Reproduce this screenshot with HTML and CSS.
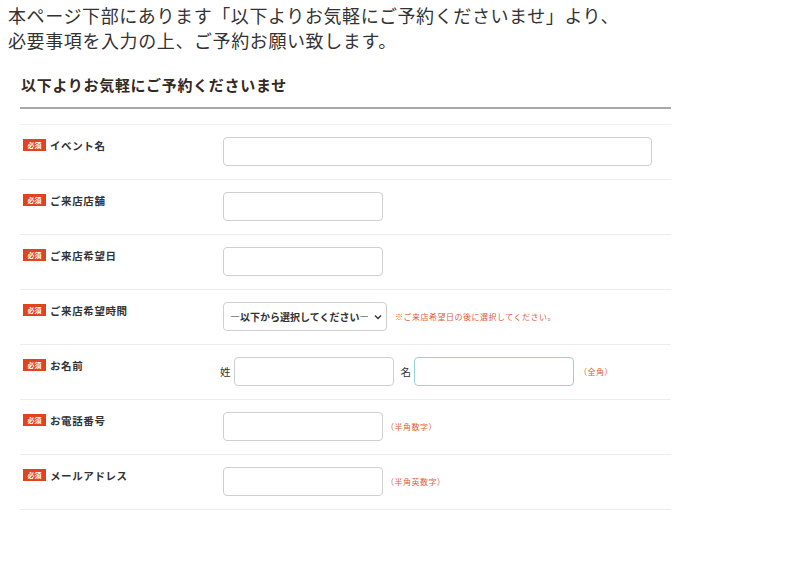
FILE: index.html
```html
<!DOCTYPE html>
<html lang="ja">

<head>
    <meta charset="UTF-8">
    <meta name="viewport" content="width=device-width, initial-scale=1.0">
    <title>ご予約フォーム</title>
    <link rel="stylesheet" href="styles.css">
</head>

<body>
    <p class="intro">本ページ下部にあります「以下よりお気軽にご予約くださいませ」より、<br>必要事項を入力の上、ご予約お願い致します。</p>

    <div class="form-container">
        <h2>以下よりお気軽にご予約くださいませ</h2>
        <form id="reserveForm" class="form-table">
            <!-- イベント名 -->
            <div class="form-row">
                <div class="form-label"><span class="required">必須</span>イベント名</div>
                <div class="form-field">
                    <input type="text" name="eventName" class="input-long">
                </div>
            </div>

            <div class="form-row">
                <div class="form-label"><span class="required">必須</span>ご来店店舗</div>
                <div class="form-field">
                    <input type="text" name="shop">
                </div>
            </div>

            <div class="form-row">
                <div class="form-label"><span class="required">必須</span>ご来店希望日</div>
                <div class="form-field">
                    <input type="text" name="visitDate">
                </div>
            </div>

            <div class="form-row">
                <div class="form-label"><span class="required">必須</span>ご来店希望時間</div>
                <div class="form-field">
                    <div class="select-wrap">
                        <select name="visitTime">
                            <option value="">―以下から選択してください―</option>
                        </select>
                        <svg class="select-arrow" width="8" height="6" viewBox="0 0 8 6">
                            <path d="M1 1.5 L4 4.5 L7 1.5" fill="none" stroke="#333" stroke-width="1.4"/>
                        </svg>
                    </div>
                    <span class="note">※ご来店希望日の後に選択してください。</span>
                </div>
            </div>

            <!-- お名前 -->
            <div class="form-row">
                <div class="form-label"><span class="required">必須</span>お名前</div>
                <div class="form-field name-field">
                    <span class="sub-label">姓</span>
                    <input type="text" name="lastName">
                    <span class="sub-label">名</span>
                    <input type="text" name="firstName" class="is-focused">
                    <span class="note paren">（全角）</span>
                </div>
            </div>

            <div class="form-row">
                <div class="form-label"><span class="required">必須</span>お電話番号</div>
                <div class="form-field">
                    <input type="tel" name="tel">
                    <span class="note paren">（半角数字）</span>
                </div>
            </div>

            <div class="form-row">
                <div class="form-label"><span class="required">必須</span>メールアドレス</div>
                <div class="form-field">
                    <input type="email" name="email">
                    <span class="note paren">（半角英数字）</span>
                </div>
            </div>
        </form>
    </div>
</body>

</html>
```

FILE: styles.css
```css
body {
    font-family: "Noto Sans CJK JP", "Noto Sans", sans-serif;
    margin: 0 8px;
    background-color: #ffffff;
    color: #333;
}

.intro {
    margin: 0;
    padding-top: 3px;
    font-size: 18px;
    line-height: 25px;
    letter-spacing: 0.6px;
    color: #333;
}

.form-container {
    width: 651px;
    margin: 22px 0 0 12px;
}

.form-container h2 {
    margin: 0;
    padding: 0 0 12px 1px;
    font-size: 15px;
    line-height: 20px;
    letter-spacing: 0.7px;
    font-weight: bold;
    color: #33291f;
    border-bottom: 2px solid #a8a8a8;
}

.form-table {
    margin-top: 15px;
    border-top: 1px solid #f0f0f0;
}

.form-row {
    display: flex;
    padding: 12px 0 13px;
    border-bottom: 1px solid #ececec;
}

.form-label {
    width: 200px;
    flex-shrink: 0;
    padding-left: 3px;
    box-sizing: border-box;
    display: flex;
    align-items: center;
    height: 16px;
    font-size: 10.5px;
    font-weight: bold;
    letter-spacing: 0.6px;
    color: #333;
}

.required {
    display: inline-block;
    width: 23px;
    height: 12px;
    line-height: 12px;
    margin-right: 4px;
    background-color: #e2431f;
    color: #fff;
    font-size: 7px;
    font-weight: bold;
    letter-spacing: 0;
    text-align: center;
}

.form-field {
    display: flex;
    align-items: center;
}

.form-field input,
.form-field select {
    height: 29px;
    width: 160px;
    margin-left: 3px;
    padding: 0 8px;
    box-sizing: border-box;
    border: 1px solid #cfcfcf;
    border-radius: 4px;
    background: #fff;
    font-family: inherit;
    font-size: 12px;
}

.form-field .input-long {
    width: 429px;
}

.form-field input.is-focused {
    border-color: #96d2d8;
    outline: none;
}

.select-wrap {
    position: relative;
}

.form-field select {
    width: 164px;
    padding: 0 18px 0 6px;
    appearance: none;
    font-size: 10px;
    font-weight: bold;
    color: #333;
}

.select-arrow {
    position: absolute;
    right: 5px;
    top: 12px;
}

.note {
    margin-left: 8px;
    font-size: 8px;
    letter-spacing: 0.5px;
    color: #e0603e;
}

.note.paren {
    margin-left: 3px;
}

.name-field .sub-label {
    font-size: 10.5px;
    color: #333;
}

.name-field input {
    margin-right: 7px;
}

.name-field input.is-focused {
    margin-right: 2px;
}
```
